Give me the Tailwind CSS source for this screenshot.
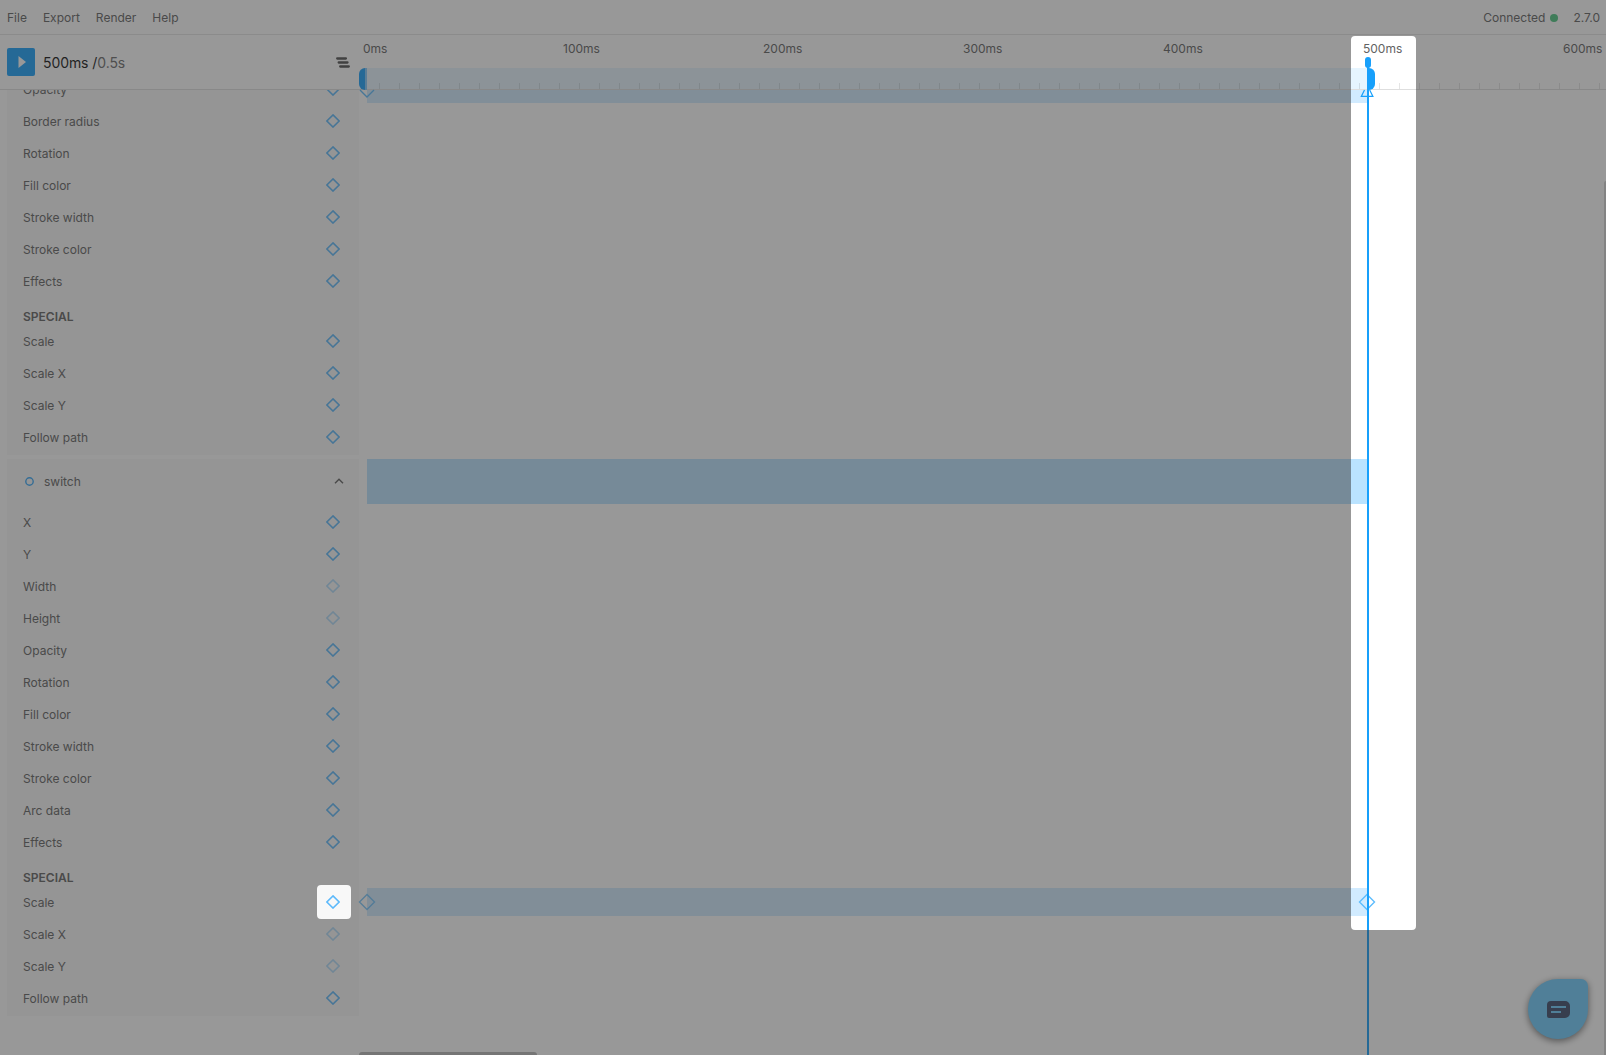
<!DOCTYPE html>
<html lang="en">
<head>
<meta charset="utf-8">
<title>Timeline</title>
<script src="https://cdn.jsdelivr.net/npm/@tailwindcss/browser@4"></script>
</head>
<body class="bg-white">
<div class="relative flex h-[1055px] w-[1606px] flex-col overflow-hidden bg-white font-['Inter',sans-serif] text-[12px] text-[#626262]">
  <nav class="flex h-[35px] shrink-0 items-center gap-4 border-b border-[#e4e4e4] pl-[7px] pr-[6px] pt-[2px]">
    <span>File</span><span>Export</span><span>Render</span><span>Help</span>
    <span class="-mr-px ml-auto flex items-center gap-[5px]">Connected<i class="size-2 rounded-full bg-[#4cc681]"></i></span>
    <span>2.7.0</span>
  </nav>

  <header class="relative z-10 flex h-[55px] shrink-0 border-b border-[#dedede] bg-white">
    <div class="flex w-[359px] shrink-0 items-center pl-[7px]">
      <button class="flex size-7 items-center justify-center rounded-[2px] bg-[#18a0fb]">
        <svg width="8" height="12" viewBox="0 0 8 12" class="ml-px fill-white"><path d="M0.5 0v12L8 6z"/></svg>
      </button>
      <div class="ml-2 text-[14px] tracking-[-0.08px] text-[#111]">500ms /<span class="text-[#6c6c6c]">0.5s</span></div>
      <svg class="ml-auto mr-[9px]" width="14" height="11" viewBox="0 0 14 11" fill="none" stroke="#505050" stroke-width="2.3" stroke-linecap="round"><path d="M1.200 1.500h8.700M2.700 5.500h8.800M4.200 9.500h8.600"/></svg>
    </div>
    <div class="relative flex-1">
      <div id="labels" class="flex pl-[4px] pt-[5px]"></div>
      <div class="absolute left-[8px] top-[33px] h-[21px] w-[1001px] bg-[#e6f5ff]"></div>
      <div class="absolute left-0 top-[33px] h-[22px] w-[8px] rounded-l-[6px] bg-gradient-to-r from-[#18a0fb] from-[75%] to-[#84c9fb] to-[75%]"></div>
      <svg id="ticks" class="absolute left-0 top-[48px] h-[6px] w-full" stroke="#000" stroke-opacity=".1"></svg>
    </div>
  </header>

  <main class="relative flex-1">
    <div class="-mt-[17px] flex">
      <aside class="flex w-[359px] shrink-0 flex-col gap-1 pl-[7px]">
        <section id="first" class="bg-[#f8f8f8] pb-[2px]"></section>
        <section class="bg-[#f8f8f8] pb-[2px]">
          <div class="mb-[2px] flex h-[45px] items-center pl-[18px] pr-[15px]">
            <svg width="9" height="9" viewBox="0 0 9 9" fill="none" stroke="#38a8f8" stroke-width="1.4"><circle cx="4.5" cy="4.5" r="3.7"/></svg>
            <span class="ml-[10px]">switch</span>
            <svg class="-mt-px ml-auto" width="10" height="6" viewBox="0 0 10 6" fill="none" stroke="#606060" stroke-width="1.4"><path d="M1 5.2 5 1.2l4 4"/></svg>
          </div>
          <div id="second"></div>
        </section>
      </aside>
      <div class="flex-1 pl-[8px]">
        <div class="mt-[2px] h-[28px] w-[1001px] bg-[#d1ebff]"></div>
        <div class="mt-[356px] h-[45px] w-[1001px] bg-[#bae3ff]"></div>
        <div class="mt-[384px] h-[28px] w-[1001px] bg-[#d1ebff]"></div>
      </div>
    </div>
  </main>

  <svg class="absolute inset-0 z-10" width="1606" height="1055" fill="none" stroke="#5dbcfd" stroke-width="1.4">
    <path d="M360 90l7 7 7-7"/>
    <path d="M367 894.5l7.5 7.5-7.5 7.5-7.5-7.5z" stroke-opacity=".8"/>
    <path d="M1367 894.5l7.5 7.5-7.5 7.5-7.5-7.5z"/>
    <path d="M1364.5 90l-3.2 6.4h11.6L1369.700 90" stroke="#18a0fb" stroke-width="1.2"/>
  </svg>
  <div class="absolute left-[1367px] top-[68px] z-20 h-[22px] w-[8px] rounded-r-[6px] bg-[#18a0fb]"></div>
  <div class="absolute left-[1367px] top-[66px] z-20 h-[989px] w-[2px] bg-[#18a0fb]"></div>
  <div class="absolute left-[1365px] top-[57px] z-20 h-[11px] w-[6px] rounded-full bg-[#18a0fb]"></div>

  <div class="absolute left-[359px] top-[1052px] h-[6px] w-[178px] rounded-[3px] bg-[#b8b8b8]"></div>
  <div class="absolute left-[1604px] top-[181px] h-[874px] w-[4px] rounded-tl-[2px] bg-[#d4d4d4]"></div>

  <div class="absolute left-[1528px] top-[979px] flex size-[60px] items-center justify-center rounded-[30px] rounded-tr-[7px] bg-[#6ecdff] shadow-[0_2px_7px_rgba(0,0,0,0.55)]">
    <svg width="23" height="17" viewBox="0 0 23 17" class="mt-[1px]"><path fill="#3c4a6a" d="M4 0h14a5 5 0 0 1 5 5v7a5 5 0 0 1-5 5H2a2 2 0 0 1-2-2V4a4 4 0 0 1 4-4z"/><path d="M4 6h15M4 11h10" stroke="#6ecdff" stroke-width="2"/></svg>
  </div>

  <svg class="absolute inset-0 z-30" width="1606" height="1055">
    <path fill="#313131" fill-opacity=".5" fill-rule="evenodd" d="M0 0H1606V1055H0ZM1355 36h57a4 4 0 0 1 4 4v886a4 4 0 0 1-4 4h-57a4 4 0 0 1-4-4V40a4 4 0 0 1 4-4ZM321 885h26a4 4 0 0 1 4 4v26a4 4 0 0 1-4 4h-26a4 4 0 0 1-4-4v-26a4 4 0 0 1 4-4Z"/>
  </svg>
</div>
<script>
  const row = (name, faint) => `<div class="flex h-8 items-center justify-between pl-4 pr-[19px]"><span class="pt-px">${name}</span><svg width="14" height="14" viewBox="0 0 14 14" fill="none" stroke="#5cb9fb" stroke-width="1.5" stroke-opacity="${faint ? 0.45 : 1}"><path d="M7 .9 13.100 7 7 13.100 .9 7z"/></svg></div>`;
  const title = '<div class="h-7 pl-4 pt-[11px] font-semibold">SPECIAL</div>';
  const build = (id, names, special, faint) => {
    document.getElementById(id).innerHTML =
      names.map(n => row(n, faint.includes(n))).join('') + title + special.map(n => row(n, faint.includes(n))).join('');
  };
  const special = ['Scale', 'Scale X', 'Scale Y', 'Follow path'];
  build('first', ['Opacity', 'Border radius', 'Rotation', 'Fill color', 'Stroke width', 'Stroke color', 'Effects'], special, []);
  build('second', ['X', 'Y', 'Width', 'Height', 'Opacity', 'Rotation', 'Fill color', 'Stroke width', 'Stroke color', 'Arc data', 'Effects'], special, ['Width', 'Height', 'Scale X', 'Scale Y']);
  document.getElementById('labels').innerHTML =
    [0, 100, 200, 300, 400, 500, 600].map(n => `<span class="w-[200px] shrink-0">${n}ms</span>`).join('');
  let d = '';
  for (let x = 20.5; x < 1247; x += 20) d += `M${x} 0v6`;
  document.getElementById('ticks').innerHTML = `<path d="${d}"/>`;
</script>
</body>
</html>
